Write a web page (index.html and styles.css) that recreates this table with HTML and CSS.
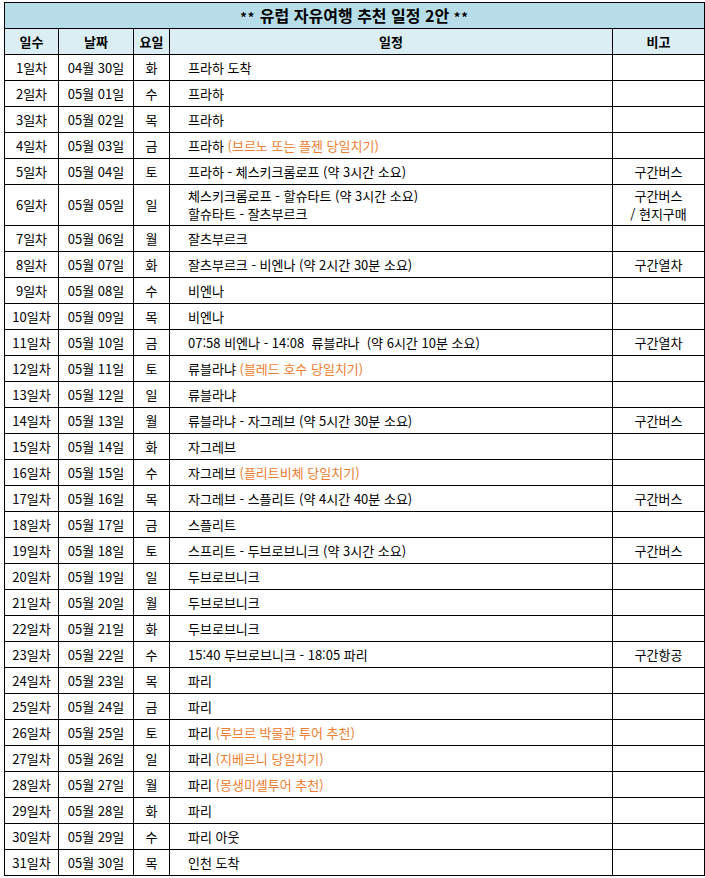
FILE: index.html
```html
<!DOCTYPE html>
<html lang="ko">
<head>
<meta charset="utf-8">
<title>유럽 자유여행 추천 일정 2안</title>
<link rel="stylesheet" href="styles.css">
</head>
<body>
<table class="plan">
  <colgroup>
    <col class="c-day"><col class="c-date"><col class="c-wd"><col class="c-plan"><col class="c-note">
  </colgroup>
  <thead>
    <tr class="title-row"><th colspan="5"><span class="star">**</span> 유럽 자유여행 추천 일정 2안 <span class="star">**</span></th></tr>
    <tr class="head-row"><th>일수</th><th>날짜</th><th>요일</th><th>일정</th><th>비고</th></tr>
  </thead>
  <tbody>
    <tr><td>1일차</td><td>04월 30일</td><td>화</td><td class="p">프라하 도착</td><td></td></tr>
    <tr><td>2일차</td><td>05월 01일</td><td>수</td><td class="p">프라하</td><td></td></tr>
    <tr><td>3일차</td><td>05월 02일</td><td>목</td><td class="p">프라하</td><td></td></tr>
    <tr><td>4일차</td><td>05월 03일</td><td>금</td><td class="p">프라하 <span class="o">(브르노 또는 플젠 당일치기)</span></td><td></td></tr>
    <tr><td>5일차</td><td>05월 04일</td><td>토</td><td class="p">프라하 - 체스키크롬로프 (약 3시간 소요)</td><td>구간버스</td></tr>
    <tr class="tall"><td>6일차</td><td>05월 05일</td><td>일</td><td class="p">체스키크롬로프 - 할슈타트 (약 3시간 소요)<br>할슈타트 - 잘츠부르크</td><td>구간버스<br>/ 현지구매</td></tr>
    <tr><td>7일차</td><td>05월 06일</td><td>월</td><td class="p">잘츠부르크</td><td></td></tr>
    <tr><td>8일차</td><td>05월 07일</td><td>화</td><td class="p">잘츠부르크 - 비엔나 (약 2시간 30분 소요)</td><td>구간열차</td></tr>
    <tr><td>9일차</td><td>05월 08일</td><td>수</td><td class="p">비엔나</td><td></td></tr>
    <tr><td>10일차</td><td>05월 09일</td><td>목</td><td class="p">비엔나</td><td></td></tr>
    <tr><td>11일차</td><td>05월 10일</td><td>금</td><td class="p">07:58 비엔나 - 14:08&nbsp; 류블랴나&nbsp; (약 6시간 10분 소요)</td><td>구간열차</td></tr>
    <tr><td>12일차</td><td>05월 11일</td><td>토</td><td class="p">류블라냐 <span class="o">(블레드 호수 당일치기)</span></td><td></td></tr>
    <tr><td>13일차</td><td>05월 12일</td><td>일</td><td class="p">류블라냐</td><td></td></tr>
    <tr><td>14일차</td><td>05월 13일</td><td>월</td><td class="p">류블라냐 - 자그레브 (약 5시간 30분 소요)</td><td>구간버스</td></tr>
    <tr><td>15일차</td><td>05월 14일</td><td>화</td><td class="p">자그레브</td><td></td></tr>
    <tr><td>16일차</td><td>05월 15일</td><td>수</td><td class="p">자그레브 <span class="o">(플리트비체 당일치기)</span></td><td></td></tr>
    <tr><td>17일차</td><td>05월 16일</td><td>목</td><td class="p">자그레브 - 스플리트 (약 4시간 40분 소요)</td><td>구간버스</td></tr>
    <tr><td>18일차</td><td>05월 17일</td><td>금</td><td class="p">스플리트</td><td></td></tr>
    <tr><td>19일차</td><td>05월 18일</td><td>토</td><td class="p">스프리트 - 두브로브니크 (약 3시간 소요)</td><td>구간버스</td></tr>
    <tr><td>20일차</td><td>05월 19일</td><td>일</td><td class="p">두브로브니크</td><td></td></tr>
    <tr><td>21일차</td><td>05월 20일</td><td>월</td><td class="p">두브로브니크</td><td></td></tr>
    <tr><td>22일차</td><td>05월 21일</td><td>화</td><td class="p">두브로브니크</td><td></td></tr>
    <tr><td>23일차</td><td>05월 22일</td><td>수</td><td class="p">15:40 두브로브니크 - 18:05 파리</td><td>구간항공</td></tr>
    <tr><td>24일차</td><td>05월 23일</td><td>목</td><td class="p">파리</td><td></td></tr>
    <tr><td>25일차</td><td>05월 24일</td><td>금</td><td class="p">파리</td><td></td></tr>
    <tr><td>26일차</td><td>05월 25일</td><td>토</td><td class="p">파리 <span class="o">(루브르 박물관 투어 추천)</span></td><td></td></tr>
    <tr><td>27일차</td><td>05월 26일</td><td>일</td><td class="p">파리 <span class="o">(지베르니 당일치기)</span></td><td></td></tr>
    <tr><td>28일차</td><td>05월 27일</td><td>월</td><td class="p">파리 <span class="o">(몽생미셸투어 추천)</span></td><td></td></tr>
    <tr><td>29일차</td><td>05월 28일</td><td>화</td><td class="p">파리</td><td></td></tr>
    <tr><td>30일차</td><td>05월 29일</td><td>수</td><td class="p">파리 아웃</td><td></td></tr>
    <tr><td>31일차</td><td>05월 30일</td><td>목</td><td class="p">인천 도착</td><td></td></tr>
  </tbody>
</table>
</body>
</html>
```

FILE: styles.css
```css
html, body {
  margin: 0;
  padding: 0;
  background: #ffffff;
}
body {
  padding: 2px 0 0 4px;
  font-family: "Noto Sans CJK KR", "Noto Sans", sans-serif;
  font-size: 13px;
  color: #000000;
}
.plan {
  border-collapse: collapse;
  table-layout: fixed;
  width: 700px;
}
.c-day { width: 54px; }
.c-date { width: 75px; }
.c-wd { width: 36px; }
.c-plan { width: 443px; }
.c-note { width: 92px; }
.plan th, .plan td {
  border: 1px solid #000000;
  padding: 0;
  text-align: center;
  vertical-align: middle;
  line-height: 18px;
  height: 25px;
  white-space: nowrap;
  overflow: hidden;
}
.title-row th {
  background: #b7dee8;
  font-size: 16px;
  font-weight: bold;
}
.star {
  font-size: 13px;
  letter-spacing: 1px;
}
.head-row th {
  background: #daeef3;
  font-weight: bold;
}
.plan td.p {
  text-align: left;
  padding-left: 18px;
}
.plan tr.tall td {
  height: 40px;
}
.o {
  color: #ed7d31;
}
```
